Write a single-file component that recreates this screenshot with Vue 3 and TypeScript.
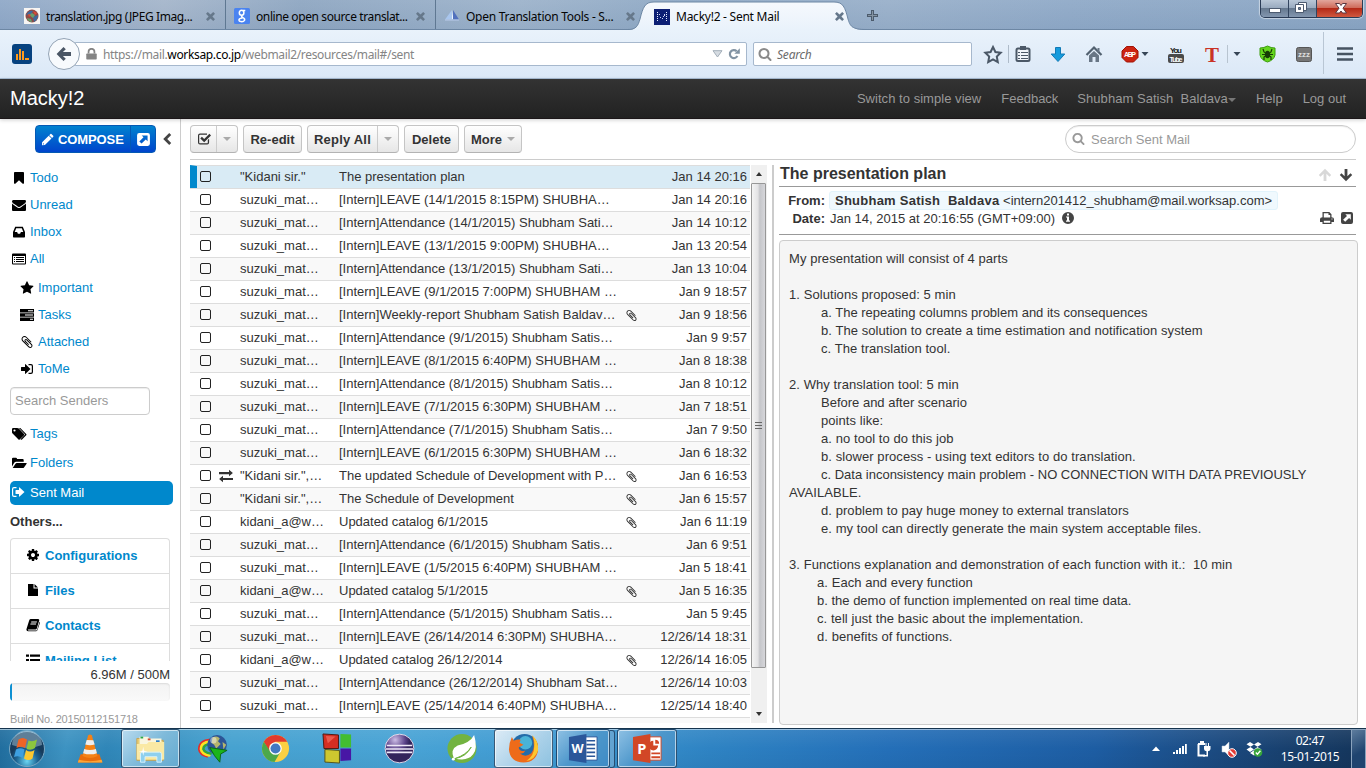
<script setup lang="ts">
import { h } from 'vue'

const glyphs: Record<string, { box: string; d: string; rule?: 'evenodd' }> = {
  bookmark: { box: '0 0 1792 1792', d: 'M1420 128q23 0 44 9 33 13 52.5 41t19.5 62v1289q0 34-19.5 62t-52.5 41q-19 8-44 8-48 0-83-32l-441-424-441 424q-36 33-83 33-23 0-44-9-33-13-52.5-41t-19.5-62v-1289q0-34 19.5-62t52.5-41q21-9 44-9h1048z' },
  envelope: { box: '0 0 1792 1792', d: 'M1792 710v794q0 66-47 113t-113 47h-1472q-66 0-113-47t-47-113v-794q44 49 101 87 362 246 497 345 57 42 92.5 65.5t94.5 48 110 24.5h2q51 0 110-24.5t94.5-48 92.5-65.5q170-123 498-345 57-39 100-87zm0-294q0 79-49 151t-122 123q-376 261-468 325-10 7-42.5 31t-54 38.5-52 32.5-57.5 27-50 9h-2q-23 0-50-9t-57.5-27-52-32.5-54-38.5-42.5-31q-91-64-262-182.5t-205-142.5q-62-42-117-115.5t-55-136.5q0-78 41.5-130t118.5-52h1472q65 0 112.5 47t47.5 113z' },
  inbox: { box: '0 0 14 14', rule: 'evenodd', d: 'M3.2 1.8h7.6L13 7v4.8a.7.7 0 0 1-.7.7H1.7a.7.7 0 0 1-.7-.7V7zM4.2 3.3 2.7 7h2.4l.8 1.7h2.2L8.9 7h2.4L9.8 3.3z' },
  list: { box: '0 0 14 14', rule: 'evenodd', d: 'M1 1.5h12a1 1 0 0 1 1 1v9a1 1 0 0 1-1 1H1a1 1 0 0 1-1-1v-9a1 1 0 0 1 1-1zM1 4v7.5h12V4zM2 5h1v1H2zM4 5h8v1H4zM2 7h1v1H2zM4 7h8v1H4zM2 9h1v1H2zM4 9h8v1H4z' },
  star: { box: '0 0 1792 1792', d: 'M1728 647q0 22-26 48l-363 354 86 500q1 7 1 20 0 21-10.5 35.5t-30.5 14.5q-19 0-40-12l-449-236-449 236q-22 12-40 12-21 0-31.5-14.5t-10.5-35.5q0-6 2-20l86-500-364-354q-25-27-25-48 0-37 56-46l502-73 225-455q19-41 49-41t49 41l225 455 502 73q56 9 56 46z' },
  tasks: { box: '0 0 14 14', rule: 'evenodd', d: 'M0 1h14v3.500H0zM8 2.300v1h5v-1zM0 5.300h14v3.500H0zM5 6.500v1h8v-1zM0 9.600h14v3.400H0zM10 10.800v1h3v-1z' },
  clip: { box: '0 0 1792 1792', d: 'M1596 1385q0 117-79 196t-196 79q-135 0-235-100l-777-776q-113-115-113-271 0-159 110-270t269-111q158 0 273 113l605 606q10 10 10 22 0 16-30.5 46.5t-46.5 30.5q-13 0-23-10l-606-607q-79-77-181-77-106 0-179 75t-73 181q0 105 76 181l776 777q63 63 145 63 64 0 106-42t42-106q0-82-63-145l-581-581q-26-24-60-24-29 0-48 19t-19 48q0 32 25 59l410 410q10 10 10 22 0 16-31 47t-47 31q-12 0-22-10l-410-410q-63-61-63-149 0-82 57-139t139-57q88 0 149 63l581 581q100 98 100 235z' },
  signin: { box: '0 0 14 14', d: 'M1 5.500q0-.5.500-.5H5V2.500q0-.7.600-.3L10.500 7 5.600 11.800Q5 12.200 5 11.500V9H1.500Q1 9 1 8.500zM8.500 2H11q2 0 2 2v6q0 2-2 2H8.500v-1.200H11q.8 0 .8-.8V4q0-.8-.8-.8H8.500z' },
  signout: { box: '0 0 14 14', d: 'M5.500 2H3Q1 2 1 4v6q0 2 2 2h2.500v-1.300H3q-.8 0-.8-.7V4q0-.7.800-.7h2.500zM4.500 5.500q0-.5.500-.5h3V2.800q0-.7.600-.3L13.500 7 8.600 11.500q-.6.400-.6-.3V9H5q-.5 0-.5-.5z' },
  tags: { box: '0 0 15 14', rule: 'evenodd', d: 'M0 2.200Q0 1 1.200 1h4l1.600.6L12 7q.6.600 0 1.200L7.700 12.500q-.6.600-1.200 0L.6 6.600Q0 6 0 5.200zM2.500 2.400a1.100 1.100 0 1 0 0 2.200 1.100 1.100 0 0 0 0-2.200zM7 1h1.300l5.900 6q.7.600 0 1.200L10 12.500q-.7.600-1.300 0l-.2-.2 4.600-4.700z' },
  folder: { box: '0 0 15 14', d: 'M0 10.500V2.800Q0 1.700 1.100 1.700h2.800Q5 1.700 5 2.800v.3h5.700q1 0 1 1.100v1.600H4.200Q3 5.800 2.200 6.800zM.7 12l2.800-4.300q.4-.8 1.300-.8h9.300q1 0 .5.800L12 11.400q-.4.700-1.300.7z' },
  cog: { box: '0 0 1792 1792', d: 'M1152 896q0-106-75-181t-181-75-181 75-75 181 75 181 181 75 181-75 75-181zm512-109v222q0 12-8 23t-20 13l-185 28q-19 54-39 91 35 50 107 138 10 12 10 25t-9 23q-27 37-99 108t-94 71q-12 0-26-9l-138-108q-44 23-91 38-16 136-29 186-7 28-36 28h-222q-14 0-24.500-8.500t-11.500-21.500l-28-184q-49-16-90-37l-141 107q-10 9-25 9-14 0-25-11-126-114-165-168-7-10-7-23 0-12 8-23 15-21 51-66.500t54-70.500q-27-50-41-99l-183-27q-13-2-21-12.500t-8-23.500v-222q0-12 8-23t19-13l186-28q14-46 39-92-40-57-107-138-10-12-10-24 0-10 9-23 26-36 98.500-107.500t94.500-71.500q13 0 26 10l138 107q44-23 91-38 16-136 29-186 7-28 36-28h222q14 0 24.500 8.500t11.500 21.500l28 184q49 16 90 37l142-107q9-9 24-9 13 0 25 10 129 119 165 170 7 8 7 22 0 12-8 23-15 21-51 66.500t-54 70.500q26 50 41 98l183 28q13 2 21 12.500t8 23.500z' },
  file: { box: '0 0 14 14', d: 'M2 1h5.500v4.500H12V13H2zM8.500 1 12 4.500H8.500z' },
  book: { box: '0 0 14 14', rule: 'evenodd', d: 'M4.600 1h7.600q1.400.3 1 1.600l-2.400 8q-.3 1-1.300 1H2.200q-.6.700.3 1h7.600q.7 0 1-.9l2.500-8q.6.300.3 1.300L11.500 12q-.4 1.300-1.600 1.300H2Q.1 13 .5 11L3 3q.4-2 1.600-2zM5.300 3.500l-.2.900h5.600l.3-.9zM4.600 5.600l-.3.900h5.600l.3-.9z' },
  bullets: { box: '0 0 14 14', d: 'M0 1.500h3v2.200H0zM0 6h3v2H0zM0 10.300h3v2.200H0zM4 1.500h10v2.200H4zM4 6h10v2H4zM4 10.300h10v2.200H4z' },
  pencil: { box: '0 0 14 14', rule: 'evenodd', d: 'M10.200 1q.5-.5 1 0l2 2q.5.500 0 1l-1.300 1.300L8.900 2.300zM8.300 2.900 11.300 5.900 4.200 13 1 13.300 1.200 10zM2.200 10.900 2 12.400l1.500-.2z' },
  popout: { box: '0 0 14 14', rule: 'evenodd', d: 'M3 1h8q2 0 2 2v8q0 2-2 2H3q-2 0-2-2V3q0-2 2-2zM5.300 3.200 7 4.900l-3.900 3.900 2.100 2L9.100 7l1.700 1.700V3.200z' },
  checkbox: { box: '0 0 14 14', d: 'M3 1.500h7v1.300H3q-.8 0-.8.800v6.800q0 .9.800.9h7q.8 0 .8-.9V8l1.300-1.300v3.900q0 2-1.900 2H3q-2 0-2-2V3.500q0-2 2-2zM14 3.400 7.200 10.300 3.300 6.400 4.900 4.800l2.300 2.300 5.200-5.300z' },
  search: { box: '0 0 1792 1792', d: 'M1216 832q0-185-131.500-316.500t-316.500-131.500-316.500 131.500-131.500 316.500 131.500 316.500 316.500 131.500 316.500-131.500 131.500-316.500zm512 832q0 52-38 90t-90 38q-54 0-90-38l-343-342q-179 124-399 124-143 0-273.500-55.500t-225-150-150-225-55.500-273.500 55.500-273.500 150-225 225-150 273.500-55.500 273.500 55.500 225 150 150 225 55.500 273.500q0 220-124 399l343 343q37 37 37 90z' },
  up: { box: '0 0 14 14', d: 'M7 .8 13.200 7l-1.700 1.800-3.100-3.100v7.300H5.600V5.700L2.500 8.800.8 7z' },
  down: { box: '0 0 14 14', d: 'M7 13.200.8 7l1.700-1.800 3.100 3.100V1h2.800v7.300l3.100-3.100L13.200 7z' },
  info: { box: '0 0 14 14', rule: 'evenodd', d: 'M7 1a6 6 0 1 1 0 12A6 6 0 0 1 7 1zM6 2.500v2h2v-2zM5 5.500v1h1v3H5v1.200h4V9.500H8v-4z' },
  print: { box: '0 0 14 14', rule: 'evenodd', d: 'M2.500 1h6.800l2.200 2.200v3q2.500 0 2.500 1.800v3h-2.500v2h-9v-2H0V8q0-1.800 2.500-1.800zM3.800 2.200v4.300h6.400V4H8.500V2.200zM3.800 9.700v2.100h6.400V9.700zM11.500 7.500v1h1v-1z' },
  transfer: { box: '0 0 14 14', d: 'M0 3h10V.8l3.900 3.300L10 7.300V5.200H0zM14 9H4V6.700L.1 9.900 4 13.200V11h10z' },
  chevron: { box: '0 0 14 14', d: 'M9.200 1 11.200 3 7.200 7l4 4L9.200 13 3.200 7z' },
  close: { box: '0 0 9 9', d: 'M1.800 0 4.500 2.600 7.200 0 9 1.800 6.400 4.500 9 7.200 7.200 9 4.500 6.400 1.800 9 0 7.200l2.600-2.700L0 1.800z' },
}

const Icon = (props: { name: string }) => {
  const g = glyphs[props.name]
  return h('svg', { viewBox: g.box, 'aria-hidden': 'true' }, [
    h('path', { d: g.d, fill: 'currentColor', 'fill-rule': g.rule ?? 'nonzero' }),
  ])
}
Icon.props = ['name']

const folders = [
  { icon: 'bookmark', label: 'Todo' },
  { icon: 'envelope', label: 'Unread' },
  { icon: 'inbox', label: 'Inbox' },
  { icon: 'list', label: 'All' },
]
const subFolders = [
  { icon: 'star', label: 'Important' },
  { icon: 'tasks', label: 'Tasks' },
  { icon: 'clip', label: 'Attached' },
  { icon: 'signin', label: 'ToMe' },
]
const others = [
  { icon: 'cog', label: 'Configurations' },
  { icon: 'file', label: 'Files' },
  { icon: 'book', label: 'Contacts' },
  { icon: 'bullets', label: 'Mailing List' },
]

interface Mail { to: string; subject: string; date: string; clip?: boolean; replied?: boolean }
const S = 'suzuki_mat…'
const K = 'kidani_a@w…'
const mails: Mail[] = [
  { to: '"Kidani sir."', subject: 'The presentation plan', date: 'Jan 14 20:16' },
  { to: S, subject: '[Intern]LEAVE (14/1/2015 8:15PM) SHUBHA…', date: 'Jan 14 20:16' },
  { to: S, subject: '[Intern]Attendance (14/1/2015) Shubham Sati…', date: 'Jan 14 10:12' },
  { to: S, subject: '[Intern]LEAVE (13/1/2015 9:00PM) SHUBHA…', date: 'Jan 13 20:54' },
  { to: S, subject: '[Intern]Attendance (13/1/2015) Shubham Sati…', date: 'Jan 13 10:04' },
  { to: S, subject: '[Intern]LEAVE (9/1/2015 7:00PM) SHUBHAM …', date: 'Jan 9 18:57' },
  { to: S, subject: '[Intern]Weekly-report Shubham Satish Baldav…', date: 'Jan 9 18:56', clip: true },
  { to: S, subject: '[Intern]Attendance (9/1/2015) Shubham Satis…', date: 'Jan 9 9:57' },
  { to: S, subject: '[Intern]LEAVE (8/1/2015 6:40PM) SHUBHAM …', date: 'Jan 8 18:38' },
  { to: S, subject: '[Intern]Attendance (8/1/2015) Shubham Satis…', date: 'Jan 8 10:12' },
  { to: S, subject: '[Intern]LEAVE (7/1/2015 6:30PM) SHUBHAM …', date: 'Jan 7 18:51' },
  { to: S, subject: '[Intern]Attendance (7/1/2015) Shubham Satis…', date: 'Jan 7 9:50' },
  { to: S, subject: '[Intern]LEAVE (6/1/2015 6:30PM) SHUBHAM …', date: 'Jan 6 18:32' },
  { to: '"Kidani sir.",…', subject: 'The updated Schedule of Development with P…', date: 'Jan 6 16:53', clip: true, replied: true },
  { to: '"Kidani sir.",…', subject: 'The Schedule of Development', date: 'Jan 6 15:57', clip: true },
  { to: K, subject: 'Updated catalog 6/1/2015', date: 'Jan 6 11:19', clip: true },
  { to: S, subject: '[Intern]Attendance (6/1/2015) Shubham Satis…', date: 'Jan 6 9:51' },
  { to: S, subject: '[Intern]LEAVE (1/5/2015 6:40PM) SHUBHAM …', date: 'Jan 5 18:41' },
  { to: K, subject: 'Updated catalog 5/1/2015', date: 'Jan 5 16:35', clip: true },
  { to: S, subject: '[Intern]Attendance (5/1/2015) Shubham Satis…', date: 'Jan 5 9:45' },
  { to: S, subject: '[Intern]LEAVE (26/14/2014 6:30PM) SHUBHA…', date: '12/26/14 18:31' },
  { to: K, subject: 'Updated catalog 26/12/2014', date: '12/26/14 16:05', clip: true },
  { to: S, subject: '[Intern]Attendance (26/12/2014) Shubham Sat…', date: '12/26/14 10:03' },
  { to: S, subject: '[Intern]LEAVE (25/14/2014 6:40PM) SHUBHA…', date: '12/25/14 18:40' },
]

const body: { text: string; level: number; tight?: boolean }[] = [
  { text: 'My presentation will consist of 4 parts', level: 0 },
  { text: '', level: 0 },
  { text: '1. Solutions proposed: 5 min', level: 0 },
  { text: 'a. The repeating columns problem and its consequences', level: 2, tight: true },
  { text: 'b. The solution to create a time estimation and notification system', level: 2 },
  { text: 'c. The translation tool.', level: 2 },
  { text: '', level: 0 },
  { text: '2. Why translation tool: 5 min', level: 0 },
  { text: 'Before and after scenario', level: 2, tight: true },
  { text: 'points like:', level: 2 },
  { text: 'a. no tool to do this job', level: 2 },
  { text: 'b. slower process - using text editors to do translation.', level: 2 },
  { text: 'c. Data inconsistency main problem - NO CONNECTION WITH DATA PREVIOUSLY', level: 2, tight: true },
  { text: 'AVAILABLE.', level: 0 },
  { text: 'd. problem to pay huge money to external translators', level: 2 },
  { text: 'e. my tool can directly generate the main system acceptable files.', level: 2 },
  { text: '', level: 0 },
  { text: '3. Functions explanation and demonstration of each function with it.:  10 min', level: 0 },
  { text: 'a. Each and every function', level: 1 },
  { text: 'b. the demo of function implemented on real time data.', level: 1, tight: true },
  { text: 'c. tell just the basic about the implementation.', level: 1 },
  { text: 'd. benefits of functions.', level: 1 },
]
</script>

<template>
  <div class="screen">
    <header class="tabs">
      <div class="tab t1">
        <svg class="fav" viewBox="0 0 16 16"><rect width="16" height="16" fill="#f7f5f3" /><circle cx="8" cy="8" r="6.500" fill="#8d4a48" /><path d="M2 7q3-5 7-4l-2 3zM9 9l5-2q0 5-4 7z" fill="#3c6a9e" /><path d="m5 7 3-2 3 2-2 3zM3 10l4 1 1 3q-4 0-5-4z" fill="#65a070" /><path d="m9 3 4 2-2 2zM4 6l3 1-2 2z" fill="#e04a32" /></svg>
        <span>translation.jpg (JPEG Imag...</span><Icon name="close" class="x" />
      </div>
      <div class="tab t2">
        <svg class="fav" viewBox="0 0 16 16"><rect width="16" height="16" rx="1.500" fill="#4a83f0" /><g fill="none" stroke="#fff" stroke-width="1.500"><ellipse cx="7.600" cy="4.800" rx="2.300" ry="2.500" /><path d="M9 2.500h2.300M8.500 7.300q-2 1.200.4 2.300 2.300 1 1.600 2.800-1 1.500-3.500 1.200-2.300-.3-2-1.900.5-1.700 3.500-1.800" /></g></svg>
        <span>online open source translat...</span><Icon name="close" class="x" />
      </div>
      <div class="tab t3">
        <svg class="fav" viewBox="0 0 16 16"><path d="M7 2v9.500H0z" fill="#a9c6ee" /><path d="m7 2 1.500 9.500L7 11z" fill="#eef6ff" /><path d="M8 2 14 11.500H8z" fill="#5271bd" /><path d="M0 11.500h14v1H0z" fill="#b9cbea" /></svg>
        <span>Open Translation Tools - S...</span><Icon name="close" class="x" />
      </div>
      <div class="tab active">
        <svg class="shape" viewBox="0 0 238 30" preserveAspectRatio="none"><defs><linearGradient id="tabfill" x2="0" y2="1"><stop stop-color="#f6f9fd" /><stop offset="1" stop-color="#e9f2fb" /></linearGradient></defs><path d="M0 30C8 30 10 26 12 19 15 7 17 2 26 2H206c9 0 11 5 14 17 2 7 4 11 18 11z" fill="url(#tabfill)" /><path d="M0 29.500C8 29.500 10 26 12 19 15 7 17 2 26 2H206c9 0 11 5 14 17 2 7 4 10.500 18 10.500" fill="none" stroke="#6d87a4" /></svg>
        <svg class="fav" viewBox="0 0 16 16"><rect width="16" height="16" fill="#0d1f74" /><path d="M3.500 3v10M12.500 3v10" stroke="#e9eeff" stroke-width="1" stroke-dasharray="1 1" /><path d="M5 5h1v1H5zM6 8h1v1H6zM8 9h1v1H8zM9 7h1v1H9zM10 5h1v2h-1z" fill="#cdd5f5" /></svg>
        <span>Macky!2 - Sent Mail</span><Icon name="close" class="x" />
      </div>
      <svg class="plus" viewBox="0 0 11 11"><path d="M4 0h3v4h4v3H7v4H4V7H0V4h4z" fill="#4c5b6c" /><path d="M5 1h1v4h4v1H6v4H5V6H1V5h4z" fill="#8493a2" /></svg>
      <div class="winctl">
        <div class="wc"><svg viewBox="0 0 26 17"><rect x="8.500" y="8.500" width="11" height="4" fill="#fff" stroke="#4d5b70" /></svg></div>
        <div class="wc"><svg viewBox="0 0 26 17"><g fill="#fff" stroke="#4d5b70"><path d="M9.500 2.500h8v8h-8z" /><path d="M6.500 4.500h8v8h-8z" /><path d="M9.500 7.500h2v2h-2z" fill="#76879e" /></g></svg></div>
        <div class="wc red"><svg viewBox="0 0 47 17"><path d="m18.500 3.500h4l1.500 2 1.500-2h4l-3.500 4.700 3.500 4.800h-4l-1.500-2-1.500 2h-4l3.500-4.800z" fill="#fff" stroke="#5a3740" /></svg></div>
      </div>
    </header>

    <div class="toolbar">
      <svg class="stats" viewBox="0 0 20 20"><rect width="20" height="20" rx="3" fill="#07427f" /><path d="M4 10h2v6H4zM7 5h2v11H7zM10 7h2v9h-2zM13 14h4v2h-4z" fill="#ff9a1c" /></svg>
      <div class="back"><svg viewBox="0 0 16 16"><path d="M7.500 1 9.800 3.200 6.900 6.100H15v3.800H6.900L9.800 12.800 7.500 15 .6 8z" fill="#4a5665" /></svg></div>
      <div class="url">
        <svg class="lock" viewBox="0 0 12 14"><path d="M1 6h10q.7 0 .7.700v5q0 .8-.8.8H1.100q-.8 0-.8-.8v-5Q.3 6 1 6z" fill="#848484" /><path d="M2.800 6V4a3.200 3.200 0 0 1 6.400 0v2" fill="none" stroke="#848484" stroke-width="1.900" /></svg>
        <span class="addr">https://mail.<b>worksap.co.jp</b>/webmail2/resources/mail#/sent</span>
        <svg class="tri" viewBox="0 0 11 8"><path d="M1 .7h9L5.500 7z" fill="#d6dce2" stroke="#a2adb8" /></svg>
        <svg class="reload" viewBox="0 0 12 12"><path d="M8.700 3.200A4 4 0 1 0 9.400 8" fill="none" stroke="#8293a3" stroke-width="2.200" /><path d="M11.800.3v5.500H6.300z" fill="#8293a3" /></svg>
      </div>
      <div class="find"><Icon name="search" /><i>Search</i></div>
      <svg class="tools" viewBox="0 0 394 48">
        <path d="m21 17 2.400 5 5.300.8-3.900 3.800 1 5.600-4.800-2.700-4.800 2.700 1-5.600-3.900-3.800 5.300-.8z" fill="none" stroke="#4b5867" stroke-width="2" />
        <path d="M36.500 15v18" stroke="#aebbc9" />
        <path d="M46 18.500h10q1.500 0 1.500 1.500v9.500q0 1.500-1.500 1.500H46q-1.500 0-1.500-1.500V20q0-1.500 1.500-1.500z" fill="#f1f5fa" stroke="#4b5867" stroke-width="2" /><path d="M48 16h6v4h-6z" fill="#4b5867" /><path d="M46 22.500h2M49 22.500h7M46 25.500h2M49 25.500h7M46 28.500h2M49 28.500h7" stroke="#4b5867" />
        <path d="M83.500 17.500h5V24h4.300L86 31.500 79.200 24h4.300z" fill="#169bdc" stroke="#127ab6" />
        <path d="m114.500 25 7.500-7.500 7.500 7.500" fill="none" stroke="#526170" stroke-width="2.200" /><path d="M117 25.500 122 21l5 4.500V32h-3.500v-5h-3v5H117zM125.500 18h2v4h-2z" fill="#687685" />
        <path d="m154.500 16.500h7l4.500 4.500v6.500l-4.500 4.500h-7l-4.500-4.500V21z" fill="#cc2412" stroke="#a11205" /><text x="158" y="27" text-anchor="middle" class="abp" textLength="12">ABP</text>
        <path d="M169.500 22h7L173 26z" fill="#374657" />
        <text x="198" y="22.500" class="you" textLength="12">You</text><rect x="196" y="24" width="16" height="9" rx="2" fill="#4a4a4a" /><text x="197.500" y="31.500" class="tube" textLength="13">Tube</text>
        <text x="240" y="31.500" text-anchor="middle" class="bigt">T</text>
        <path d="M255.500 15v18" stroke="#b8c4d0" /><path d="M261.500 22h7l-3.500 4z" fill="#374657" />
        <path d="M288 18q4 0 7.500-2 3.500 2 7.500 2v7q-1 5-7.500 7-6.500-2-7.500-7z" fill="#64d51c" stroke="#3b9c0b" /><ellipse cx="295.500" cy="24.500" rx="2.600" ry="3.800" fill="#173b06" /><path d="m291 19 1 3 7 5v3m1-11-1 3-7 5v3m-2-5.500h11" fill="none" stroke="#173b06" stroke-width="1.200" />
        <rect x="324.500" y="17.500" width="15" height="14" rx="2" fill="#777" stroke="#555" /><text x="332" y="27" text-anchor="middle" class="zzz">zzz</text>
        <path d="M351.500 2v42" stroke="#b9c6d4" /><path d="M365 18.500h16M365 24h16M365 29.500h16" stroke="#465361" stroke-width="2.600" />
      </svg>
    </div>

    <nav class="navbar">
      <div class="brand">Macky!2</div>
      <div class="links">
        <span>Switch to simple view</span><span>Feedback</span>
        <span class="user">Shubham Satish&nbsp; Baldava<i class="caret"></i></span>
        <span>Help</span><span>Log out</span>
      </div>
    </nav>

    <main class="app">
      <aside class="side">
        <div class="compose-row">
          <div class="compose"><span class="cmain"><Icon name="pencil" />COMPOSE</span><span class="cpop"><Icon name="popout" /></span></div>
          <Icon name="chevron" class="collapse" />
        </div>
        <ul class="nav main-nav"><li v-for="f in folders" :key="f.label"><Icon :name="f.icon" />{{ f.label }}</li></ul>
        <ul class="nav sub-nav"><li v-for="f in subFolders" :key="f.label"><Icon :name="f.icon" />{{ f.label }}</li></ul>
        <div class="senders">Search Senders</div>
        <ul class="nav lower"><li><Icon name="tags" />Tags</li><li><Icon name="folder" />Folders</li></ul>
        <div class="sent"><Icon name="signout" />Sent Mail</div>
        <div class="others-title">Others...</div>
        <ul class="others"><li v-for="o in others" :key="o.label"><Icon :name="o.icon" />{{ o.label }}</li></ul>
        <div class="quota">6.96M / 500M</div>
        <div class="meter"><div></div></div>
        <div class="build">Build No. 20150112151718</div>
      </aside>

      <section class="work">
        <div class="actions">
          <div class="btn split"><span class="chk"><Icon name="checkbox" /></span><span class="drop"><i class="caret"></i></span></div>
          <div class="btn reedit">Re-edit</div>
          <div class="btn split"><span class="reply">Reply All</span><span class="drop"><i class="caret"></i></span></div>
          <div class="btn delete">Delete</div>
          <div class="btn more">More<i class="caret"></i></div>
          <div class="searchbox"><Icon name="search" />Search Sent Mail</div>
        </div>
        <div class="panes">
          <div class="mails">
            <div v-for="(m, i) in mails" :key="i" class="mail" :class="{ selected: i === 0 }">
              <span class="box"></span>
              <span class="flag"><Icon v-if="m.replied" name="transfer" /></span>
              <span class="to">{{ m.to }}</span>
              <span class="subject">{{ m.subject }}</span>
              <span class="att"><Icon v-if="m.clip" name="clip" /></span>
              <span class="date">{{ m.date }}</span>
            </div>
            <div class="mail"></div>
          </div>
          <div class="scroll">
            <div class="arrow"><i class="aup"></i></div>
            <div class="thumb"><i></i><i></i><i></i></div>
            <div class="arrow end"><i class="adown"></i></div>
          </div>
          <article class="reader">
            <div class="title"><h1>The presentation plan</h1><Icon name="up" class="off" /><Icon name="down" /></div>
            <div class="meta">
              <div class="line"><b class="key">From:</b><span class="from"><b>Shubham Satish&nbsp; Baldava</b> &lt;intern201412_shubham@mail.worksap.com&gt;</span></div>
              <div class="line"><b class="key">Date:</b><span class="when">Jan 14, 2015 at 20:16:55 (GMT+09:00)</span><Icon name="info" /><span class="grow"></span><Icon name="print" /><Icon name="popout" class="pop" /></div>
            </div>
            <div class="body"><div v-for="(l, i) in body" :key="i" class="bl" :class="['lv' + l.level, { tight: l.tight }]">{{ l.text }}</div></div>
          </article>
        </div>
      </section>
    </main>

    <footer class="taskbar">
      <div class="slot start">
        <svg viewBox="0 0 38 38"><defs><radialGradient id="orb" cy=".85"><stop stop-color="#6bd5f2" /><stop offset=".6" stop-color="#1e6695" /><stop offset="1" stop-color="#163b5c" /></radialGradient></defs><circle cx="19" cy="19" r="17.500" fill="url(#orb)" stroke="#7aa8c4" /><path d="M4 15a15 15 0 0 1 30 0q-15 6-30 0z" fill="#b6d2e2" opacity=".45" /><path d="M10.500 9.500q4-3 8.500 0l-2 8.500q-4-2.500-8.500 0z" fill="#ee6426" /><path d="M20.500 10.500q4 2 8.500-1l-2 8.500q-4 3-8.500 1z" fill="#8cc63e" /><path d="M8 19.500q4-2.500 8.500 0l-2 8.500q-4-3-8.500-1z" fill="#3e9fe0" /><path d="M18 20q4 3 8.500 0l-2 8.500q-4 3-8.500 0z" fill="#fdc82f" /></svg>
      </div>
      <div class="slot s2"><svg viewBox="0 0 32 32"><path d="M6 22h20l3 9H3z" fill="#e96d0b" /><path d="M14 2q2-2 4 0l6 22q-8 4-16 0z" fill="#f58216" /><path d="m12.500 7 7 .2 1.500 4.500q-5 1.500-10 0zM9.800 16.500q6 2 12.500 0l1 4.500q-7 2.500-14.600 0z" fill="#eee" /><path d="M4 28q12 3 24.500 0l.8 3H3z" fill="#ffa535" /></svg></div>
      <div class="slot s3 lit"><svg viewBox="0 0 34 32"><path d="M2 5h10l2 2h17v22H2z" fill="#e8cd74" stroke="#c5a250" /><path d="M5 3h10v8H5zM14 5h15v7H14z" fill="#f9f6e0" /><path d="M6 3h3v2H6z" fill="#2ba84a" /><path d="M14 5h3v2h-3z" fill="#d94b31" /><path d="M23 7h4v2h-4z" fill="#3180c8" /><path d="M2 11h11l2-2h17v19H2z" fill="#fae9a4" /><path d="M6 31V22q0-2 2-2h19q2 0 2 2v9h-5v-6H11v6z" fill="#8fd0ee" stroke="#d9f3ff" /><path d="m9 14 .8 4.500 4.200.5-4.200.8L9 24l-.8-4.200L4 19l4.200-.5z" fill="#fff" /></svg></div>
      <div class="slot s4"><svg viewBox="0 0 34 32"><g fill="none" stroke-linecap="round"><path d="M15 6Q2 7 2 17q1 6 9 8" stroke="#e42e2a" stroke-width="2" /><path d="M15 8.500Q4 9 4.500 17q1 5 9 6.500" stroke="#ffe21f" stroke-width="3" /><path d="M15 11.500q-8 0-8 5 1 4 8 5" stroke="#31a53c" stroke-width="2.600" /></g><circle cx="22" cy="12" r="10.800" fill="#2d5596" /><path d="M17 4q5-3 8 1l-2 3 3 3-5 5q-2-5-5-6zM28 9l4 3-3 5z" fill="#b5b56c" /><circle cx="18" cy="7" r="3.500" fill="#fff" opacity=".45" /><path d="m14 15 19 3-7 4-1 9q-6-6-11-16z" fill="#1bb51a" stroke="#0a6410" /></svg></div>
      <div class="slot s5"><svg viewBox="0 0 32 32"><circle cx="16" cy="16" r="14" fill="#fbd043" /><path d="M3.900 9A14 14 0 0 1 28.100 9H16l-6 3.500v7z" fill="#e33b2e" /><path d="M3.900 9A14 14 0 0 0 15 30l6-10.500H11z" fill="#4ca84a" /><circle cx="16" cy="16" r="6.500" fill="#fff" /><circle cx="16" cy="16" r="5.200" fill="#4379c2" /></svg></div>
      <div class="slot s6"><svg viewBox="0 0 32 32"><path d="m1 1 16 1v14H2z" fill="#d42e22" stroke="#501913" /><path d="m19 1 11 .5V15H19z" fill="#43bd31" /><path d="m3 17 15 1v13L3 30z" fill="#cdc72f" stroke="#55531a" /><path d="M19 16h11v12l-11 1z" fill="#4816a5" /><path d="m4 3 10 .5-8 7z" fill="#f8786a" opacity=".6" /></svg></div>
      <div class="slot s7"><svg viewBox="0 0 32 32"><defs><radialGradient id="ecl" cx=".35" cy=".2"><stop stop-color="#cdbde6" /><stop offset=".7" stop-color="#5b4389" /><stop offset="1" stop-color="#33245c" /></radialGradient></defs><circle cx="16" cy="16" r="14.800" fill="url(#ecl)" stroke="#e2ddec" /><path d="M3 13h26M2 16.500h28M3 20h26" stroke="#eee8f7" stroke-width="1.600" /></svg></div>
      <div class="slot s8"><svg viewBox="0 0 32 32"><circle cx="15.500" cy="16" r="15" fill="#72b340" /><path d="M28 2q4 14-1 20-6 8-20 4-4-9 4-13 13-3 17-11z" fill="#fff" /><path d="M8 26.500q12-2 17-12-5 8-17 12z" fill="#72b340" stroke="#72b340" /><circle cx="6.500" cy="27" r="1.500" fill="#fff" /></svg></div>
      <div class="slot s9 lit bright"><svg viewBox="0 0 32 32"><circle cx="17" cy="15" r="14" fill="#236ca9" /><circle cx="18" cy="10" r="7" fill="#49b3d7" /><path d="M25 3q7 6 6 15-2 12-15 12.500Q2 30 1 17 1 10 4 4l2 4q4-2 7-1l-1 3 4 2-5 3q1 5 7 3-2 4-6 3 6 5 12 0 5-6 1-18z" fill="#ee6b19" /><path d="M25 2q7 7 6 16-3 9-12 11 8-6 8-14 1-7-2-13z" fill="#fdc72f" /></svg></div>
      <div class="slot s10 open"><svg viewBox="0 0 32 32"><path d="M17 4h13v24H17z" fill="#fff" stroke="#2b579a" /><path d="M19 8h9M19 12h9M19 16h9M19 20h9M19 24h9" stroke="#2b579a" stroke-width="1.600" /><path d="M1 4 19 1v30L1 28z" fill="#2b579a" /><text x="10" y="21" text-anchor="middle" class="office">W</text></svg></div>
      <div class="stack"></div>
      <div class="slot s11 open"><svg viewBox="0 0 32 32"><path d="M17 4h13v24H17z" fill="#fff" stroke="#d24726" /><path d="M22 8a5 5 0 1 0 5 5h-5zM24 7v4h4a4 4 0 0 0-4-4zM20 20h9v2h-9zM20 24h9v2h-9z" fill="#d24726" /><path d="M1 4 19 1v30L1 28z" fill="#d24726" /><text x="10" y="21.500" text-anchor="middle" class="office ppt">P</text></svg></div>
      <div class="grow"></div>
      <svg class="tray" viewBox="0 0 112 20">
        <path d="M1 12h8L5 7.500z" fill="#fff" />
        <path d="M22 13h2v2h-2zM25 11h2v4h-2zM28 9h2v6h-2zM31 7h2v8h-2zM34 5h1.800v10H34z" fill="#fff" />
        <path d="M47 5h7M47.500 5v11.500H54M49 3h4" fill="none" stroke="#fff" stroke-width="2" /><path d="M53 7v3q0 2 2.500 2.300V16H52v1.500h5v-5.200q2.500-.3 2.500-2.300V7H58V4h-1v3h-1.500V4h-1v3z" fill="#fff" />
        <path d="M71 7h3l4-4v14l-4-4h-3z" fill="#fff" stroke="#bcc9d9" stroke-width=".5" /><circle cx="81" cy="14" r="4.300" fill="#e33b34" stroke="#fff" /><path d="m78.500 11.500 5 5" stroke="#fff" stroke-width="1.600" />
        <path d="m99 3 4 2.500-3.500 2.300-4-2.500zM107 3l-4 2.500 3.500 2.300 4-2.500zM95.500 10.500l4-2.500 3.500 2.500-4 2.500zM103 10.500l3.500-2.500 4 2.500-4 2.500zM99 14l4-2.700 4 2.700-4 2.500z" fill="#fff" /><circle cx="107" cy="13.500" r="4.300" fill="#37a53c" /><path d="m104.800 13.500 1.600 1.700 3-3.400" fill="none" stroke="#fff" stroke-width="1.300" />
      </svg>
      <div class="clock"><div>02:47</div><div>15-01-2015</div></div>
      <div class="desk"></div>
    </footer>
  </div>
</template>

<style>
html, body { margin: 0; overflow: hidden; }
</style>

<style scoped>
* { box-sizing: border-box; }
ul, h1 { margin: 0; padding: 0; list-style: none; }
svg { display: block; flex: none; }
.screen { width: 1366px; height: 768px; display: flex; flex-direction: column; font-family: "Liberation Sans", Arial, sans-serif; font-size: 13px; color: #333; background: #fff; overflow: hidden; }
.grow { flex: 1; }

.tabs { height: 30px; flex: none; display: flex; position: relative; background: linear-gradient(180deg, rgba(255,255,255,.05), rgba(50,80,120,.06)), linear-gradient(90deg, #90a9c8, #a5b6cb 12%, #8fa7c2 22%, #9db3cb 38%, #8fa9c5 50%, #99b0ca 65%, #90aac8 78%, #8ba6c4 100%); border-bottom: 1px solid #6d87a4; font-family: "Noto Sans", "Open Sans", sans-serif; font-size: 12px; color: #050505; }
.tab { height: 29px; display: flex; align-items: center; padding: 3px 0 0; white-space: nowrap; }
.tab span { margin-left: 6px; letter-spacing: -.4px; }
.tab .x { margin-left: auto; width: 9px; height: 9px; color: #66788b; }
.fav { width: 16px; height: 16px; }
.t1 { width: 226px; padding-left: 24px; padding-right: 10px; border-right: 1px solid #5f7892; }
.t2 { width: 210px; padding-left: 8px; padding-right: 10px; border-right: 1px solid #5f7892; }
.t3 { width: 208px; padding-left: 9px; padding-right: 9px; }
.t3 span { margin-left: 5px; letter-spacing: -.27px; }
.active { width: 216px; height: 30px; padding-left: 10px; padding-right: 16px; position: relative; }
.active span { letter-spacing: -.25px; }
.active > * { position: relative; }
.active .shape { position: absolute; left: -16px; top: 0; width: 238px; height: 30px; }
.plus { width: 11px; height: 11px; margin: 10px 0 0 7px; }
.winctl { position: absolute; right: 3px; top: 0; width: 103px; height: 18px; display: flex; border: 1px solid #2a3b55; border-top: 0; border-radius: 0 0 5px 5px; overflow: hidden; box-shadow: 0 0 1px 1px rgba(255,255,255,.5); }
.wc { width: 28px; border-right: 1px solid #33455f; background: linear-gradient(#b9c7d7, #9aabc0 45%, #66798f 50%, #8396af); }
.wc svg { width: 26px; height: 17px; }
.wc.red { flex: 1; border: 0; background: linear-gradient(#e2a69c, #cf6c5b 45%, #b42a17 50%, #d0583f); }
.wc.red svg { width: 47px; }

.toolbar { height: 49px; flex: none; display: flex; align-items: center; position: relative; background: linear-gradient(#e9f2fb, #dbe8f7); border-bottom: 1px solid #a9bdd4; }
.stats { width: 20px; height: 20px; margin: 0 16px 0 12px; }
.back { width: 32px; height: 32px; margin-right: -6px; border-radius: 50%; border: 1px solid #93a3b5; background: #f7fafd; display: grid; place-items: center; z-index: 1; }
.back svg { width: 16px; height: 16px; }
.url { width: 673px; height: 24px; border: 1px solid #a6b8cd; border-radius: 2px; background: #fff; display: flex; align-items: center; padding-left: 11px; font-family: "Noto Sans", "Open Sans", sans-serif; font-size: 12px; color: #858585; }
.lock { width: 11px; height: 13px; }
.addr { margin-left: 6px; letter-spacing: -.34px; flex: 1; }
.addr b { font-weight: 400; color: #000; }
.tri { width: 11px; height: 8px; margin-right: 5px; }
.reload { width: 12px; height: 12px; margin-right: 6px; }
.find { width: 219px; height: 24px; margin-left: 6px; border: 1px solid #a6b8cd; border-radius: 2px; background: #fff; display: flex; align-items: center; padding-left: 4px; gap: 5px; color: #6b6b6b; font-family: "Noto Sans", "Open Sans", sans-serif; font-size: 12px; letter-spacing: -.2px; }
.find svg { width: 14px; height: 14px; color: #8a8a8a; }
.tools { width: 394px; height: 48px; }
.abp { font: bold 7px "Liberation Sans", sans-serif; fill: #fff; }
.you { font: bold 8px "Liberation Sans", sans-serif; fill: #222; }
.tube { font: bold 7px "Liberation Sans", sans-serif; fill: #fff; }
.bigt { font: bold 21px "Liberation Serif", serif; fill: #c93325; }
.zzz { font: bold 8px "Liberation Sans", sans-serif; fill: #ddd; }

.navbar { height: 40px; flex: none; display: flex; align-items: center; padding: 0 20px 0 10px; background: linear-gradient(#333, #222); border-bottom: 1px solid #1c1719; box-shadow: 0 1px 4px rgba(0,0,0,.2); z-index: 2; }
.brand { font-size: 20px; color: #fff; flex: 1; }
.links { display: flex; gap: 20px; color: #999; }
.links span:first-child { letter-spacing: .04px; }
.links .user { letter-spacing: .04px; margin-left: -1px; }
.caret { display: inline-block; width: 0; height: 0; border: 4px solid transparent; border-top-color: #aaa; border-bottom: 0; vertical-align: middle; }
.user .caret { border-top-color: #777; }

.app { height: 609px; flex: none; display: flex; }
.side { width: 181px; flex: none; border-right: 1px solid #ccc; padding: 6px 0 0 10px; color: #08c; overflow: hidden; }
.compose-row { display: flex; align-items: center; padding-left: 25px; }
.compose { width: 121px; height: 28px; display: flex; border: 1px solid #0459b4; border-radius: 4px; background: linear-gradient(#0082cf, #04c); color: #fff; font-weight: 700; letter-spacing: -.1px; }
.cmain { width: 95px; display: flex; align-items: center; padding-left: 5px; gap: 4px; border-right: 1px solid #0459b4; }
.cmain svg { width: 13px; height: 13px; }
.cpop { flex: 1; display: grid; place-items: center; }
.cpop svg { width: 15px; height: 15px; }
.collapse { width: 14px; height: 14px; margin-left: 4px; color: #444; }
.nav svg { width: 14px; height: 14px; color: #000; }
.nav li { height: 27px; display: flex; align-items: center; gap: 4px; padding-left: 2px; }
.main-nav { padding-top: 11px; }
.sub-nav { padding: 2px 0 0 8px; }
.senders { width: 140px; height: 28px; margin-top: 5px; padding-left: 4px; border: 1px solid #ccc; border-radius: 4px; color: #999; line-height: 26px; box-shadow: inset 0 1px 1px rgba(0,0,0,.075); }
.lower { padding-top: 4px; }
.lower li { height: 29px; gap: 3px; }
.lower svg { width: 15px; }
.sent { width: 163px; height: 24px; margin-top: 4px; padding: 0 0 2px 1px; display: flex; align-items: center; gap: 5px; background: #08c; border-radius: 5px; color: #fff; }
.sent svg { width: 14px; height: 14px; }
.others-title { height: 33px; line-height: 33px; color: #333; font-weight: 700; }
.others { width: 160px; height: 123px; overflow: hidden; border: 1px solid #ddd; border-bottom: 0; border-radius: 4px 4px 0 0; font-weight: 700; }
.others li { height: 35px; display: flex; align-items: center; gap: 5px; padding: 0 0 2px 15px; border-bottom: 1px solid #ddd; }
.others svg { width: 14px; height: 14px; color: #000; }
.quota { width: 160px; margin-top: 6px; height: 16px; line-height: 16px; text-align: right; color: #333; }
.meter { width: 160px; height: 18px; background: linear-gradient(#f3f3f3, #f9f9f9); border-radius: 4px; overflow: hidden; box-shadow: inset 0 1px 2px rgba(0,0,0,.1); }
.meter div { width: 2px; height: 18px; background: #0e90d2; }
.build { margin-top: 11px; height: 14px; line-height: 14px; font-size: 11px; letter-spacing: -.2px; color: #999; }

.work { flex: 1; min-width: 0; padding: 6px 10px 0 9px; display: flex; flex-direction: column; }
.actions { height: 35px; flex: none; border-bottom: 1px solid #ccc; display: flex; align-items: flex-start; gap: 5px; }
.btn { height: 28px; display: flex; align-items: center; justify-content: center; border: 1px solid #c5c5c5; border-bottom-color: #b3b3b3; border-radius: 4px; background: linear-gradient(#fff, #e6e6e6); font-weight: 700; }
.btn span { height: 26px; display: flex; align-items: center; justify-content: center; }
.chk { width: 26px; border-right: 1px solid #ccc; }
.chk svg { width: 14px; height: 14px; }
.drop { width: 20px; }
.reedit { width: 59px; }
.reply { width: 70px; border-right: 1px solid #ccc; letter-spacing: .2px; }
.delete { width: 55px; }
.more { width: 58px; gap: 5px; }
.searchbox { width: 291px; height: 28px; margin-left: auto; border: 1px solid #ccc; border-radius: 14px; display: flex; align-items: center; gap: 6px; padding-left: 6px; color: #999; box-shadow: inset 0 1px 1px rgba(0,0,0,.075); }
.searchbox svg { width: 13px; height: 13px; position: relative; top: -1px; }
.panes { flex: 1; min-height: 0; display: flex; padding-top: 5px; }
.mails { width: 560px; flex: none; height: 558px; overflow: hidden; }
.mail { height: 23px; display: flex; align-items: center; border-top: 1px solid #ddd; padding: 0 0 1px 10px; white-space: nowrap; }
.mail:nth-child(odd) { background: #f9f9f9; }
.mail.selected { background: #d9ebf5; border-left: 7px solid #08c; padding-left: 3px; }
.box { width: 11px; height: 11px; border: 1px solid #222; border-radius: 2px; }
.flag { width: 29px; padding-left: 8px; }
.flag svg { width: 14px; height: 14px; }
.to { width: 99px; }
.subject { width: 286px; }
.att { width: 16px; padding-top: 1px; }
.att svg { width: 13px; height: 13px; color: #333; }
.date { flex: 1; text-align: right; padding-right: 3px; }
.scroll { width: 16px; flex: none; height: 558px; margin-left: 1px; background: #f0f0f0; display: flex; flex-direction: column; }
.arrow { height: 18px; display: grid; place-items: center; }
.aup { border: 3px solid transparent; border-bottom: 4px solid #333; border-top: 0; }
.adown { border: 3px solid transparent; border-top: 4px solid #333; border-bottom: 0; }
.thumb { width: 15px; height: 485px; border: 1px solid #979797; border-radius: 1px; background: linear-gradient(90deg, #f4f4f4, #e3e3e5 45%, #c5c6ca 60%, #d6d6da); display: flex; flex-direction: column; align-items: center; justify-content: center; gap: 2px; }
.thumb i { width: 7px; height: 1px; background: #666; }
.end { margin-top: auto; }
.reader { flex: 1; min-width: 0; height: 558px; margin-left: 5px; border-left: 2px solid #ccc; padding-left: 5px; }
.title { height: 22px; display: flex; align-items: center; border-bottom: 1px solid #999; padding: 0 3px 3px 1px; }
.title h1 { font-size: 16px; line-height: 18px; flex: 1; }
.title svg { width: 14px; height: 14px; margin-left: 7px; color: #444; position: relative; top: 1px; }
.title .off { color: #d8d8d8; }
.meta { height: 48px; border-bottom: 1px solid #999; padding: 4px 2px 0 0; }
.line { display: flex; align-items: center; height: 18px; }
.key { width: 46px; text-align: right; }
.from { margin-left: 4px; height: 19px; line-height: 17px; padding: 0 5px; background: #f0f9fe; border: 1px solid #e2f3fb; border-radius: 3px; white-space: pre; }
.from b { letter-spacing: .24px; }
.when { margin: 0 6px 0 5px; }
.line svg { width: 14px; height: 14px; color: #444; }
.line .pop { margin-left: 6px; }
.body { width: 579px; height: 485px; margin-top: 5px; padding: 9px; background: #f5f5f5; border: 1px solid #ccc; border-radius: 4px; }
.bl { height: 18px; line-height: 18px; white-space: pre; letter-spacing: .07px; }
.bl.tight { letter-spacing: 0; }
.lv1 { padding-left: 28px; }
.lv2 { padding-left: 32px; }

.taskbar { height: 40px; flex: none; display: flex; align-items: center; border-top: 1px solid #16344e; box-shadow: inset 0 1px 0 rgba(255,255,255,.5); background: linear-gradient(rgba(255,255,255,.08), transparent 50%, rgba(0,0,0,.04)), linear-gradient(100deg, #1f6c9d, #3d93c2 5%, #2f86b8 8%, #46a2d0 17%, #48a3d5 30%, #3f9ad2 40%, #2e83c3 52%, #246fb8 65%, #1d5da3 80%, #1b4a80 89%, #143459); }
.slot { width: 62px; height: 39px; display: grid; place-items: center; flex: none; }
.slot svg { width: 31px; height: 31px; }
.start { width: 58px; padding-right: 4px; }
.start svg { width: 38px; height: 38px; }
.s2 { width: 63px; }
.s2 svg { width: 30px; }
.s3 { width: 59px; }
.s4 { width: 65px; }
.s5 { width: 60px; }
.s6 { width: 64px; }
.s7 { width: 61px; }
.s8 { width: 64px; }
.lit, .open { border: 1px solid rgba(20,50,80,.75); border-radius: 3px; box-shadow: inset 0 0 0 1px rgba(255,255,255,.6); background: linear-gradient(135deg, #b9dbef, #7fbada 50%, #64aad0); }
.bright { width: 59px; background: linear-gradient(135deg, #dcebf6, #a9d0e8 60%, #8dc2e0); }
.open { background: linear-gradient(135deg, #8fc1e4, #4d97cb 50%, #3f8bc5); }
.s10 { width: 54px; margin-left: 3px; }
.s11 { width: 60px; margin-left: 2px; }
.stack { width: 5px; height: 38px; border: 1px solid rgba(20,50,80,.75); border-left: 0; border-radius: 0 3px 3px 0; background: #63a4d2; }
.office { font: bold 13px "Open Sans", sans-serif; fill: #fff; }
.ppt { font-size: 15px; }
.tray { width: 112px; height: 20px; margin-right: 15px; }
.clock { width: 64px; text-align: center; color: #fff; font: 12px/16px "Noto Sans", "Open Sans", sans-serif; letter-spacing: -.4px; margin-right: 9px; white-space: nowrap; }
.desk { width: 15px; height: 39px; border: 1px solid #8aa3bd; border-bottom: 0; background: linear-gradient(150deg, #5d7c9d, #1f446f 60%); }
</style>
